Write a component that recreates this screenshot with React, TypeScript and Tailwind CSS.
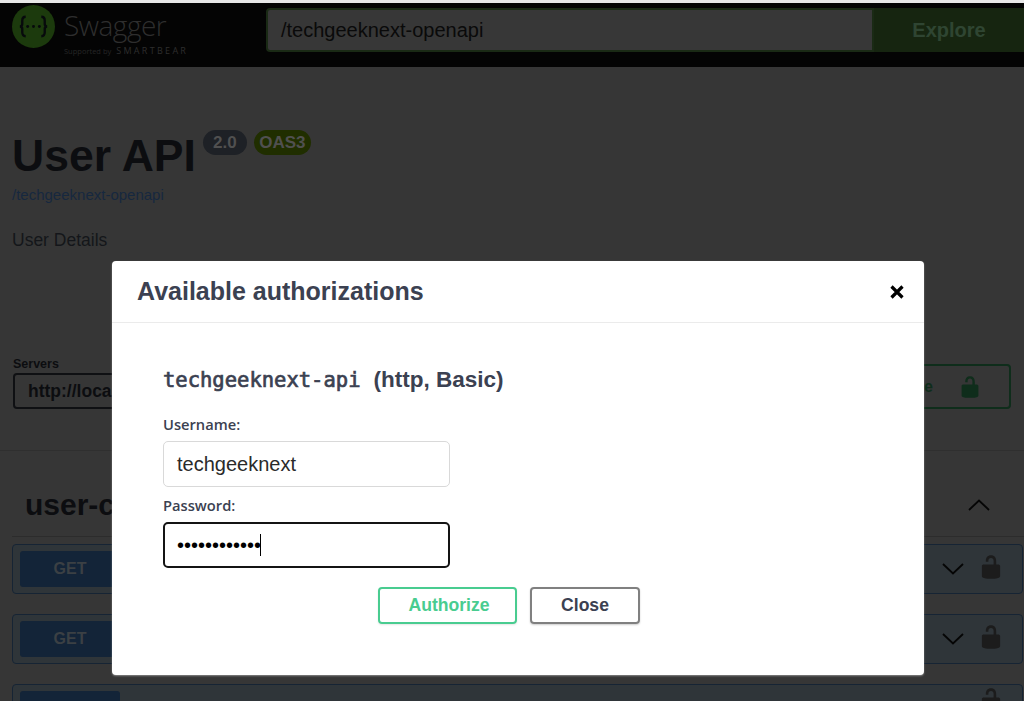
const LOCK = "M15.8 8H14V5.6C14 2.703 12.665 1 10 1 7.334 1 6 2.703 6 5.6V6h2v-.801C8 3.754 8.797 3 10 3c1.203 0 2 .754 2 2.199V8H4c-.553 0-1 .646-1 1.199V17c0 .549.428 1.139.951 1.307l1.197.387C5.672 18.861 6.55 19 7.1 19h5.8c.549 0 1.428-.139 1.951-.307l1.196-.387c.524-.167.953-.757.953-1.306V9.199C17 8.646 16.352 8 15.8 8z";

function Lock({ className }: { className: string }) {
  return (
    <svg viewBox="0 0 20 20" className={className} fill="currentColor">
      <path d={LOCK} />
    </svg>
  );
}

function Chevron({ up }: { up?: boolean }) {
  return (
    <svg viewBox="0 0 22 12" className="h-[12px] w-[22px] shrink-0 text-[#050505]" fill="none" stroke="currentColor" strokeWidth="1.8">
      <polyline points={up ? "1,11 11,1.5 21,11" : "1,1 11,10.5 21,1"} />
    </svg>
  );
}

function Row() {
  return (
    <div className="mr-[1px] flex h-[50px] shrink-0 items-center justify-between rounded-[4px] border border-[#162434] bg-[#2f3539] pl-[7px] pr-[18px]">
      <div className="flex h-[36px] w-[100px] items-center justify-center rounded-[3px] bg-[#132438] text-[16px] font-bold text-[#3b4044]">GET</div>
      <div className="flex items-center gap-[14px]">
        <Chevron />
        <Lock className="-mt-[4px] h-[26px] w-[26px] text-[#1c1c1c]" />
      </div>
    </div>
  );
}

export default function App() {
  return (
    <div className="relative h-[701px] w-[1024px] overflow-hidden bg-[#363636] font-['Liberation_Sans',sans-serif]">
      <div className="h-[3px] bg-[#e8e8e8]" />
      <header className="flex h-[64px] items-start bg-[#040404] pt-[2px] pl-[12px]">
        <div className="flex w-[254px] shrink-0 items-start gap-[9px]">
          <svg viewBox="0 0 44 44" className="h-[43px] w-[43px] shrink-0">
            <circle cx="22" cy="22" r="22" fill="#1c3a0d" />
            <path d="M14 12c-3 0-3.500 1.500-3.500 4v3.500c0 1.500-1 2.500-2.500 2.500 1.500 0 2.500 1 2.500 2.500V28c0 2.500.5 4 3.500 4M30 12c3 0 3.500 1.500 3.500 4v3.500c0 1.500 1 2.500 2.500 2.500-1.500 0-2.500 1-2.500 2.500V28c0 2.500-.5 4-3.500 4" fill="none" stroke="#070a0c" strokeWidth="2.400" />
            <circle cx="16" cy="22" r="1.500" fill="#070a0c" />
            <circle cx="22" cy="22" r="1.500" fill="#070a0c" />
            <circle cx="28" cy="22" r="1.500" fill="#070a0c" />
          </svg>
          <div className="flex flex-col font-['Open_Sans',sans-serif] text-[#2e2e2e]">
            <span className="mt-[2px] text-[28px] leading-[36px] font-light tracking-[-0.5px]">Swagger</span>
            <span className="mt-[2px] flex items-baseline gap-[5px] leading-[12px] whitespace-nowrap">
              <span className="text-[7.500px] text-[#262626]">Supported by</span>
              <span className="text-[9px] tracking-[2.300px]">SMARTBEAR</span>
            </span>
          </div>
        </div>
        <div className="mt-[3px] flex h-[44px] flex-1 items-center">
          <div className="flex h-full flex-1 items-center rounded-l-[4px] border-2 border-[#1a2a15] bg-[#373737] pl-[13px] text-[20px] text-[#0a0a0a]">/techgeeknext-openapi</div>
          <div className="flex h-full w-[150px] items-center justify-center bg-[#162510] text-[20px] font-bold text-[#2f4532]">Explore</div>
        </div>
      </header>

      <div className="pl-[12px]">
        <div className="mt-[61px] flex items-start">
          <h1 className="mt-[1px] text-[44.500px] leading-[54px] font-bold text-[#0c0d10]">User API</h1>
          <span className="mt-[2px] ml-[7px] flex h-[25px] w-[44px] items-center justify-center rounded-full bg-[#1e2126] text-[17px] font-bold text-[#505050]">2.0</span>
          <span className="mt-[2px] ml-[7px] flex h-[25px] w-[57px] items-center justify-center rounded-full bg-[#202e00] text-[17px] font-bold text-[#505050]">OAS3</span>
        </div>
        <div className="mt-[3px] text-[15px] leading-[18px] text-[#16283f]">/techgeeknext-openapi</div>
        <div className="mt-[26px] text-[17.500px] leading-[20px] text-[#14161a]">User Details</div>
      </div>

      <div className="mt-[98px] h-[103px] border-b border-[#2f2f2f] pl-[13px]">
        <div className="flex items-start justify-between pr-[13px]">
          <div>
            <div className="pt-[9px] text-[12.500px] leading-[14px] font-bold text-[#0c0d10]">Servers</div>
            <div className="mt-[2px] flex h-[36px] w-[280px] items-center rounded-[4px] border-2 border-[#0f1013] pl-[13px] text-[17.500px] font-bold text-[#0c0d10]">http://loca</div>
          </div>
          <div className="mt-[16px] flex h-[45px] w-[130px] items-center justify-end gap-[25px] rounded-[4px] border-2 border-[#0f2d1b] pr-[27px] text-[16px] font-bold text-[#0f2d1b]">
            <span>e</span>
            <Lock className="h-[24px] w-[24px] shrink-0" />
          </div>
        </div>
      </div>

      <section className="flex flex-col pl-[12px]">
        <div className="flex h-[86px] items-center justify-between border-b border-[#2c2c2c] pt-[22px] pr-[34px] pl-[13px]">
          <span className="text-[30px] font-bold text-[#0c0d10]">user-c</span>
          <Chevron up />
        </div>
        <div className="mt-[7px] flex flex-col gap-[20px]">
          <Row />
          <Row />
          <div className="mr-[1px] flex h-[50px] items-start justify-between rounded-[4px] border border-[#162434] bg-[#2f3539] pt-[6px] pr-[18px] pl-[7px]">
            <div className="h-[36px] w-[100px] rounded-[3px] bg-[#132438]" />
            <Lock className="-mt-[4px] h-[26px] w-[26px] text-[#1c1c1c]" />
          </div>
        </div>
      </section>

      <div className="absolute top-[261px] left-[112px] flex h-[414px] w-[812px] flex-col rounded-[4px] bg-white shadow-[0_1px_2px_rgba(255,255,255,0.4)]">
        <div className="flex h-[62px] shrink-0 items-center justify-between border-b border-[#ebebeb] pr-[20px] pl-[25px]">
          <h3 className="text-[25px] font-bold text-[#3b4151]">Available authorizations</h3>
          <svg viewBox="0 0 14 14" className="h-[14px] w-[14px]" stroke="#000" strokeWidth="3.200" fill="none">
            <path d="M1.500 1.500L12.500 12.500M12.500 1.500L1.500 12.500" />
          </svg>
        </div>
        <div className="flex flex-col pl-[51px]">
          <h4 className="mt-[43px] flex h-[28px] items-center text-[22.500px] font-bold whitespace-pre text-[#3b4151]">
            <code className="font-['DejaVu_Sans_Mono',monospace] text-[20.500px] font-normal [-webkit-text-stroke:0.7px_#3b4151]">techgeeknext-api</code>
            <span className="ml-[13px]">(http, Basic)</span>
          </h4>
          <label className="mt-[20px] font-['Open_Sans',sans-serif] text-[14.700px] leading-[20px] font-semibold text-[#3b4151]">Username:</label>
          <div className="mt-[7px] flex h-[46px] w-[287px] items-center rounded-[5px] border border-[#d9d9d9] pl-[13px] text-[20px] text-[#2a2a2a]">techgeeknext</div>
          <label className="mt-[8px] font-['Open_Sans',sans-serif] text-[14.700px] leading-[20px] font-semibold text-[#3b4151]">Password:</label>
          <div className="mt-[7px] flex h-[46px] w-[287px] items-center rounded-[5px] border-2 border-[#141414] pl-[12px] text-[20px] text-black">
            <span>••••••••••••</span>
            <span className="-ml-[1px] h-[22px] w-[1px] bg-black" />
          </div>
        </div>
        <div className="mt-[19px] ml-[266px] flex gap-[13px]">
          <button className="h-[37px] w-[139px] rounded-[4px] border-2 border-[#49cc90] pl-[3px] text-[17.600px] font-bold text-[#49cc90] shadow-[0_1px_2px_rgba(0,0,0,0.1)]">Authorize</button>
          <button className="h-[37px] w-[110px] rounded-[4px] border-2 border-[#808080] text-[17.600px] font-bold text-[#3b4151] shadow-[0_1px_2px_rgba(0,0,0,0.2)]">Close</button>
        </div>
      </div>
    </div>
  );
}
